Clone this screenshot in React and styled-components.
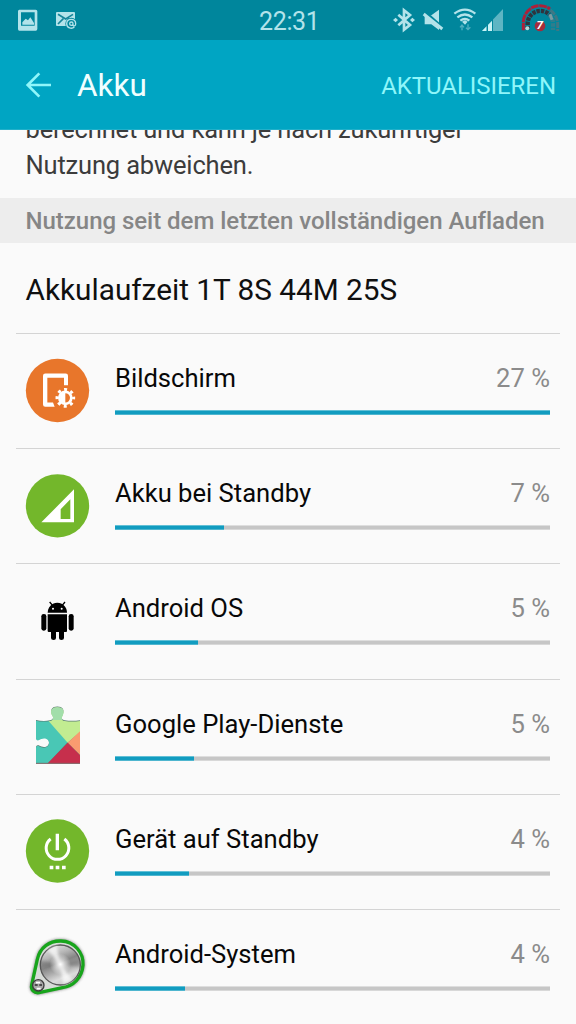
import React from "react";
import styled, { createGlobalStyle } from "styled-components";

const GlobalStyle = createGlobalStyle`
  * { box-sizing: border-box; }
  body { margin: 0; background: #fafafa; font-family: Roboto, "Liberation Sans", sans-serif; }
`;

const Screen = styled.div`
  width: 576px;
  height: 1024px;
  overflow: hidden;
  background: #fafafa;
  display: flex;
  flex-direction: column;
`;

const StatusBar = styled.header`
  flex: none;
  height: 40px;
  background: #00869c;
  display: grid;
  grid-template-columns: 1fr auto 1fr;
  align-items: start;
`;

const StatusGroup = styled.div`
  display: flex;
  height: 40px;
  justify-content: ${(p) => (p.$end ? "flex-end" : "flex-start")};
  svg { display: block; }
`;

const Clock = styled.span`
  font-size: 25px;
  line-height: 40px;
  padding: 2px 0 0 2.5px;
  color: #b3e3ea;
  letter-spacing: -0.4px;
  height: 40px;
`;

const AppBar = styled.div`
  flex: none;
  height: 90px;
  background: #00a5c3;
  border-bottom: 1px solid #22b0ca;
  display: flex;
  align-items: center;
  padding: 1px 20px 0 25px;
`;

const Title = styled.h1`
  margin: 1px auto 0 25px;
  font-size: 31.5px;
  font-weight: 400;
  color: #f0ffff;
`;

const Action = styled.button`
  border: 0;
  padding: 0;
  margin-top: 2px;
  background: none;
  font: 400 24px Roboto, sans-serif;
  letter-spacing: -0.05px;
  color: #8ff6fa;
`;

const Note = styled.div`
  flex: none;
  height: 68px;
  overflow: hidden;
  display: flex;
  flex-direction: column;
  justify-content: flex-end;
  padding: 0 25.5px 15px;
`;

const NoteLine = styled.p`
  margin: 0;
  font-size: 25.5px;
  line-height: 36px;
  white-space: nowrap;
  color: #3c3c3c;
  letter-spacing: -0.17px;
`;

const SectionHeader = styled.h2`
  flex: none;
  margin: 0;
  height: 45px;
  padding: 1px 25.5px 0;
  background: #ededed;
  font-size: 24px;
  line-height: 45px;
  font-weight: 500;
  letter-spacing: -0.03px;
  white-space: nowrap;
  color: #868686;
`;

const Runtime = styled.div`
  flex: none;
  height: 90px;
  padding: 0 25.5px;
  font-size: 29.75px;
  line-height: 93px;
  white-space: nowrap;
  color: #101010;
`;

const List = styled.ul`
  flex: none;
  list-style: none;
  margin: 0 16px;
  padding: 0;
`;

const Row = styled.li`
  height: 115.2px;
  border-top: 1px solid #d4d4d4;
  display: flex;
  padding: 24px 10px 0 9px;
`;

const IconSlot = styled.svg`
  flex: none;
  width: 64px;
  height: 64px;
  display: block;
  margin-right: 26px;
  overflow: visible;
`;

const Usage = styled.div`
  flex: 1;
`;

const Labels = styled.div`
  display: flex;
  justify-content: space-between;
  height: 52px;
  line-height: 40px;
  font-size: 25.6px;
  white-space: nowrap;
`;

const Name = styled.span`
  color: #080808;
`;

const Percent = styled.span`
  color: #8b8b8b;
`;

const Track = styled.div`
  height: 5px;
  background: linear-gradient(#dedede 1px, #c6c6c6 1px, #c6c6c6 4px, #d8d8d8 4px);
`;

const Fill = styled.div`
  height: 5px;
  background: linear-gradient(#62c0d6 1px, #129cc0 1px, #129cc0 4px, #4fb6cf 4px);
`;

const Back = () => (
  <svg width="27" height="26" viewBox="75 214 81 78" fill="none" stroke="#8ff6fa" strokeWidth="8">
    <path d="M118 218 83 253l35 35M83 253h70" />
  </svg>
);

const LeftStatus = () => (
  <svg width="90" height="40" viewBox="0 0 270 120">
    <path fill="#b3e3ea" fillRule="evenodd" d="M58 29h49q5 0 5 5v53q0 5-5 5H58q-4 0-4-5V34q0-5 4-5zM63 37v40h41V37z" />
    <path fill="#b3e3ea" d="M67 74v-7l10-11 7 5 7-9 11 17v5z" />
    <path fill="#b3e3ea" d="M171 36h51q3 0 3 3v36q0 3-3 3h-51q-3 0-3-3V39q0-3 3-3z" />
    <path d="m174 43 23 14 22-14M174 72l16-16M219 70l-15-14" fill="none" stroke="#16859a" strokeWidth="5" />
    <circle cx="214" cy="71" r="18" fill="#00869c" />
    <path d="M219 71a5 5 0 1 0-10 0 5 5 0 0 0 10 0zv4c1 5 9 3 8-5-1-15-26-17-27 1 0 14 16 17 23 10" fill="none" stroke="#b3e3ea" strokeWidth="4" />
  </svg>
);

const RightStatus = () => (
  <svg width="186" height="40" viewBox="30 0 558 120">
    <path d="m55 44 35 31-18 14V31l18 14-35 31" fill="none" stroke="#b3e3ea" strokeWidth="8" />
    <path fill="#b3e3ea" d="m39 60 8-7 7 7-7 7zM90 60l7-7 8 7-8 7z" />
    <path fill="#b3e3ea" d="M134 46h20l23-17v61l-23-17h-20z" />
    <path d="m130 34 59 52" stroke="#00869c" strokeWidth="12" />
    <path d="m131 42 56 45" stroke="#b3e3ea" strokeWidth="9" />
    <g fill="none" stroke="#b3e3ea" strokeWidth="7">
      <path d="M223 41q32-24 63 0M232 52q23-17 45 0M241 62q14-10 27 0" />
    </g>
    <path fill="#b3e3ea" d="m246 65 9-4 8 4-8 9z" />
    <path d="M246 91V75m-6 7 6-7 6 7M264 73v16m-6-6 6 6 7-7" fill="none" stroke="#4eb0c0" strokeWidth="4" />
    <path fill="#5eb5c3" d="m306 93 63-66v66z" />
    <path fill="#c9f4f7" d="m306 93 14-14v14zM324 75l12-12v30h-12z" />
    <path fill="#00869c" d="M320 70h4v23h-4zM336 55h3v38h-3z" />
    <g fill="none">
      <path d="M430 94V70a50 50 0 0 1 80-40" stroke="#ad2039" strokeWidth="9" strokeDasharray="23 2" transform="translate(0 -3)" />
      <path d="M511 31a50 50 0 0 1 22 40v22" stroke="#3f7784" strokeWidth="9" strokeDasharray="18 3" />
      <path d="M443 88V71a38 38 0 0 1 65-27" stroke="#30343d" strokeWidth="13" strokeDasharray="10 3" />
      <path d="M508 44a38 38 0 0 1 11 27v19" stroke="#307d8c" strokeWidth="13" strokeDasharray="11 3" />
      <path d="M510 43l6 16" stroke="#7b9ba1" strokeWidth="9" />
    </g>
    <circle cx="442" cy="85" r="6" fill="#b7d8da" />
    <ellipse cx="480" cy="78" rx="16" ry="16" fill="#a42c3c" />
    <text x="479" y="88" textAnchor="middle" fontFamily="Roboto" fontStyle="italic" fontWeight="700" fontSize="35" fill="#fff">7</text>
  </svg>
);

const ScreenIcon = () => (
  <IconSlot viewBox="75 83.5 192 192">
    <circle cx="172.5" cy="181" r="95" fill="#e8762b" />
    <path fill="#fff" d="M136 130h61q7 0 7 7v28h-12v-22h-50v74h17l5 13h-28q-7 0-7-7v-86q0-7 7-7z" />
    <circle cx="196" cy="203" r="29" fill="#e8762b" />
    <circle cx="196" cy="203" r="25" fill="none" stroke="#fff" strokeWidth="9" strokeDasharray="9 10.635" strokeDashoffset="4.5" />
    <circle cx="196" cy="203" r="18" fill="#e8762b" stroke="#fff" strokeWidth="8" />
    <path fill="#fff" d="M196 187a16 16 0 0 0 0 32z" />
  </IconSlot>
);

const SignalIcon = () => (
  <IconSlot viewBox="45 38 192 192">
    <circle cx="142.5" cy="136.5" r="95" fill="#73b72b" />
    <path fill="#fff" fillRule="evenodd" d="m94 186 98-99v99zM152 147v29h29v-59z" />
  </IconSlot>
);

const AndroidIcon = () => (
  <IconSlot viewBox="45 24 192 192">
    <path d="M113 98c0-13 7-22 16-27 8-4 18-4 26 0 9 5 16 14 16 27z" />
    <path d="m119 66 9 11m37-11-9 11" stroke="#000" strokeWidth="4" />
    <circle cx="129" cy="86" r="3" fill="#fff" />
    <circle cx="155" cy="86" r="3" fill="#fff" />
    <path d="M113 103h58v50q0 3-3 3h-52q-3 0-3-3z" />
    <rect x="94" y="102" width="15" height="50" rx="7" />
    <rect x="176" y="102" width="15" height="50" rx="7" />
    <path d="M123 150h15v24q0 6-7 6-8 0-8-6zM147 150h15v24q0 6-8 6-7 0-7-6z" />
  </IconSlot>
);

const PUZZLE = "M78 91q22 5 42 1 11-2 9-12c-5-8-7-15-4-22 5-10 29-10 34 0 3 7 1 14-3 22-2 8 1 11 8 12q22 3 46 0v128H78v-48q1-7 8-5c8 5 16 6 22 4 12-4 12-21 0-26-8-2-14 0-22 5-6 1-8-2-8-8z";

const PlayIcon = () => (
  <IconSlot viewBox="45 41 192 192">
    <clipPath id="puzzle"><path d={PUZZLE} /></clipPath>
    <path d={PUZZLE} fill="#587b72" transform="translate(0 -2)" />
    <g clipPath="url(#puzzle)">
      <path fill="#49c7b5" d="M70 45h20l83 111-65 70H70z" />
      <path fill="#c2ec91" d="M85 45h130v76l-42 36-58-66z" />
      <path fill="#a2deaa" d="M120 45h42v44h-42z" />
      <path fill="#f99b70" d="m173 157 40-37v77z" />
      <path fill="#c62f4c" d="m173 157 40 41v24H110z" />
    </g>
    <path d="M78 219h132" stroke="#7c6464" strokeWidth="3" />
  </IconSlot>
);

const PowerIcon = () => (
  <IconSlot viewBox="45 42 192 192">
    <circle cx="142.5" cy="138" r="95" fill="#73b72b" />
    <path d="M122 102a34 34 0 1 0 41 0" fill="none" stroke="#fff" strokeWidth="9" />
    <path fill="#fff" d="M137 86h10v50h-10zM119 182h11v11h-11zM137 182h11v11h-11zM156 182h11v11h-11z" />
  </IconSlot>
);

const CASE = "M82 103c8-35 36-56 71-55 40 1 68 35 66 72-3 39-29 63-62 68l-70 15c-15 2-25-9-22-23z";

const SystemIcon = () => (
  <IconSlot viewBox="45 27 192 192">
    <defs>
      <linearGradient id="metal" x1="0.3" y1="0" x2="0.7" y2="1">
        <stop offset="0" stopColor="#e2e2e2" />
        <stop offset="0.25" stopColor="#b5b5b5" />
        <stop offset="0.44" stopColor="#858585" />
        <stop offset="0.6" stopColor="#a8a8a8" />
        <stop offset="0.8" stopColor="#dcdcdc" />
        <stop offset="1" stopColor="#c4c4c4" />
      </linearGradient>
      <radialGradient id="shine">
        <stop offset="0" stopColor="#fff" />
        <stop offset="1" stopColor="#fff" stopOpacity="0" />
      </radialGradient>
      <filter id="soft" x="-20%" y="-20%" width="140%" height="140%"><feGaussianBlur stdDeviation="4" /></filter>
    </defs>
    <path d={CASE} fill="#555" stroke="#555" strokeWidth="10" filter="url(#soft)" opacity=".8" />
    <path d={CASE} fill="#d8dcd8" stroke="#18a51c" strokeWidth="10" />
    <circle cx="151" cy="120" r="60" fill="url(#metal)" stroke="#585858" strokeWidth="4" />
    <path fill="#444" opacity=".3" filter="url(#soft)" d="m151 119-61-13v22zM151 119l61-18v24z" />
    <path fill="#fff" opacity=".7" filter="url(#soft)" d="m151 120-38-46 27-13zM151 120l9 58 28-13z" />
    <circle cx="151" cy="118" r="32" fill="url(#shine)" />
    <circle cx="85" cy="181" r="17" fill="#a9a9a9" stroke="#3c3c3c" strokeWidth="4" />
    <path d="M74 180h9m5 0h8" stroke="#4b4b4b" strokeWidth="6" />
    <path d="M78 173h12M80 191h12" stroke="#fff" strokeWidth="5" />
  </IconSlot>
);

const ITEMS = [
  { name: "Bildschirm", percent: 27, width: 435, Icon: ScreenIcon },
  { name: "Akku bei Standby", percent: 7, width: 109, Icon: SignalIcon },
  { name: "Android OS", percent: 5, width: 83, Icon: AndroidIcon },
  { name: "Google Play-Dienste", percent: 5, width: 79, Icon: PlayIcon },
  { name: "Gerät auf Standby", percent: 4, width: 74, Icon: PowerIcon },
  { name: "Android-System", percent: 4, width: 70, Icon: SystemIcon },
];

export default function App() {
  return (
    <>
      <GlobalStyle />
      <Screen>
        <StatusBar>
          <StatusGroup><LeftStatus /></StatusGroup>
          <Clock>22:31</Clock>
          <StatusGroup $end><RightStatus /></StatusGroup>
        </StatusBar>
        <AppBar>
          <Back />
          <Title>Akku</Title>
          <Action>AKTUALISIEREN</Action>
        </AppBar>
        <Note>
          <NoteLine>berechnet und kann je nach zukünftiger</NoteLine>
          <NoteLine>Nutzung abweichen.</NoteLine>
        </Note>
        <SectionHeader>Nutzung seit dem letzten vollständigen Aufladen</SectionHeader>
        <Runtime>Akkulaufzeit 1T 8S 44M 25S</Runtime>
        <List>
          {ITEMS.map(({ name, percent, width, Icon }) => (
            <Row key={name}>
              <Icon />
              <Usage>
                <Labels>
                  <Name>{name}</Name>
                  <Percent>{percent} %</Percent>
                </Labels>
                <Track><Fill style={{ width }} /></Track>
              </Usage>
            </Row>
          ))}
        </List>
      </Screen>
    </>
  );
}
